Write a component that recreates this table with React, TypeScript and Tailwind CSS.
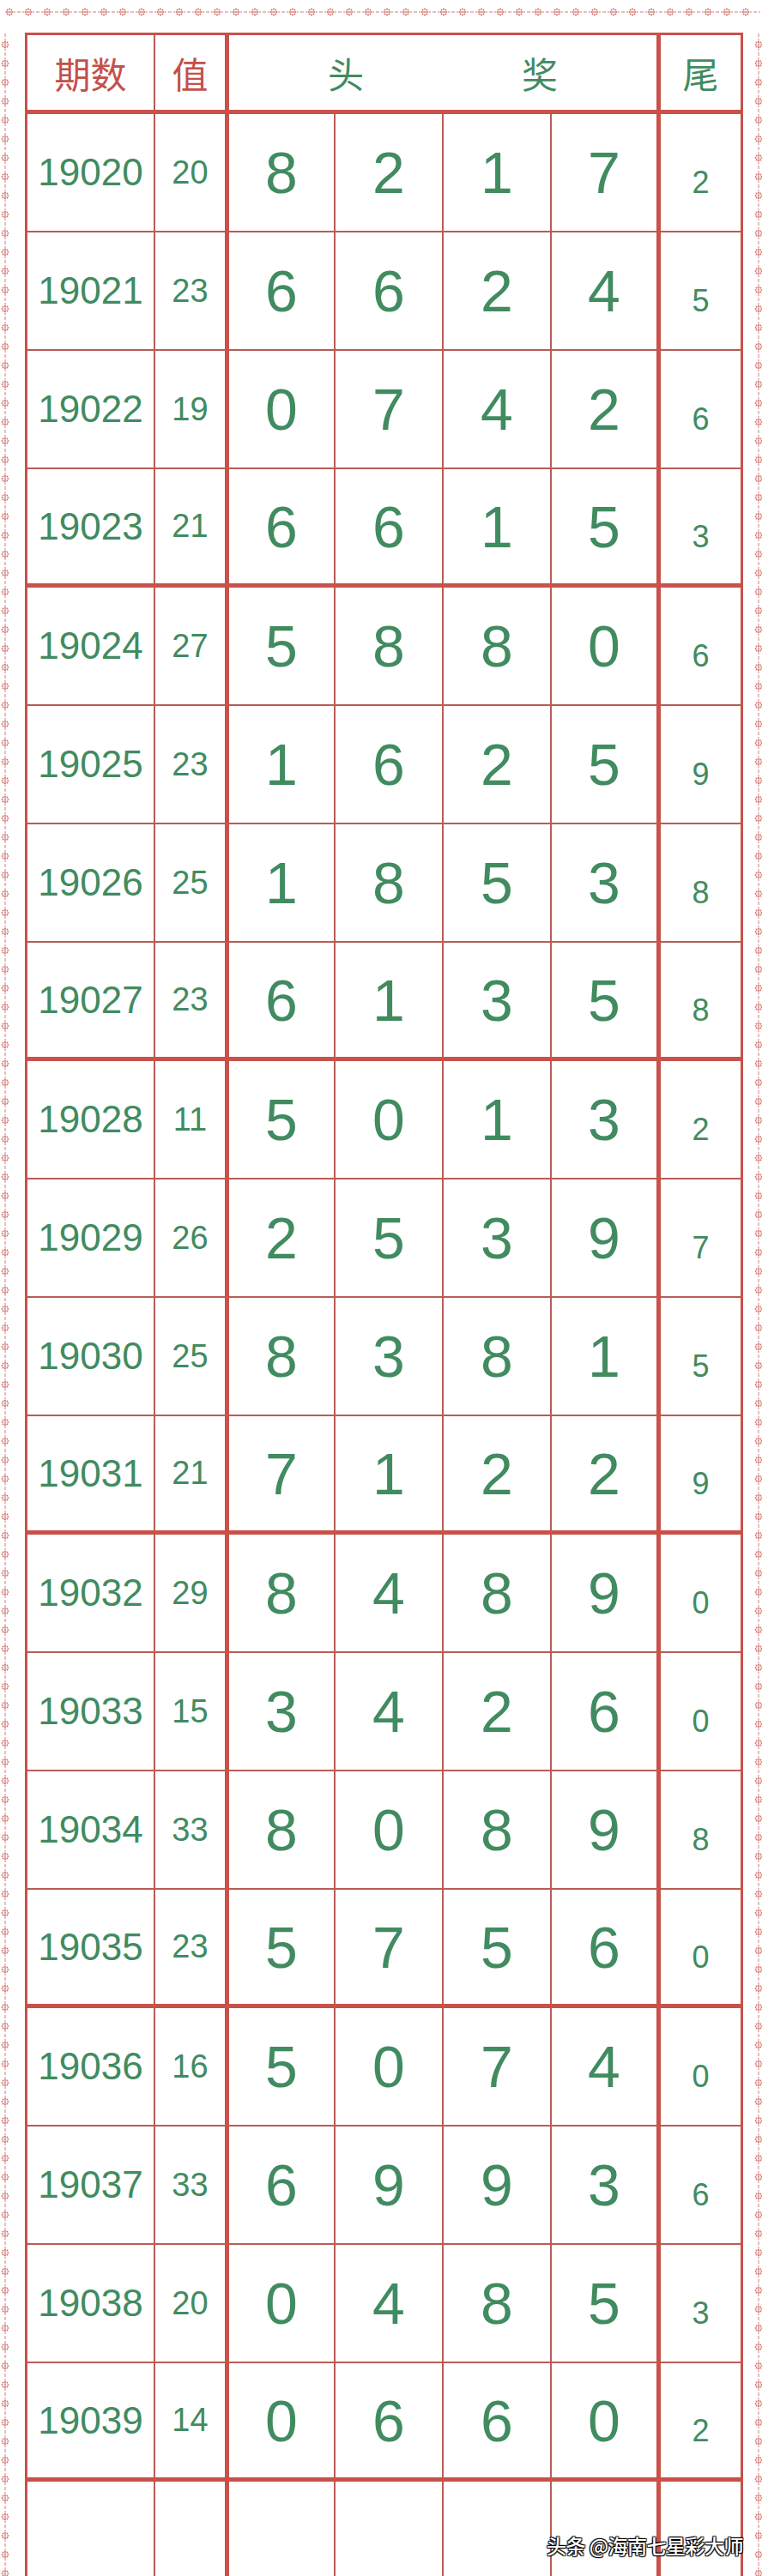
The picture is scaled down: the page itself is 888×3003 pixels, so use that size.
import React from "react";

type Draw = { id: string; sum: string; nums: string; tail: string };

// 期号 / 值 / 头奖四位 / 尾
const draws: Draw[] = [
  { id: "19020", sum: "20", nums: "8217", tail: "2" },
  { id: "19021", sum: "23", nums: "6624", tail: "5" },
  { id: "19022", sum: "19", nums: "0742", tail: "6" },
  { id: "19023", sum: "21", nums: "6615", tail: "3" },
  { id: "19024", sum: "27", nums: "5880", tail: "6" },
  { id: "19025", sum: "23", nums: "1625", tail: "9" },
  { id: "19026", sum: "25", nums: "1853", tail: "8" },
  { id: "19027", sum: "23", nums: "6135", tail: "8" },
  { id: "19028", sum: "11", nums: "5013", tail: "2" },
  { id: "19029", sum: "26", nums: "2539", tail: "7" },
  { id: "19030", sum: "25", nums: "8381", tail: "5" },
  { id: "19031", sum: "21", nums: "7122", tail: "9" },
  { id: "19032", sum: "29", nums: "8489", tail: "0" },
  { id: "19033", sum: "15", nums: "3426", tail: "0" },
  { id: "19034", sum: "33", nums: "8089", tail: "8" },
  { id: "19035", sum: "23", nums: "5756", tail: "0" },
  { id: "19036", sum: "16", nums: "5074", tail: "0" },
  { id: "19037", sum: "33", nums: "6993", tail: "6" },
  { id: "19038", sum: "20", nums: "0485", tail: "3" },
  { id: "19039", sum: "14", nums: "0660", tail: "2" },
];

const COLS = "grid grid-cols-[149px_86px_124px_126px_126px_127px_96px]";
const digitFont = { fontFamily: '"Liberation Sans", Arial, sans-serif' };

function Flower({ cx, cy }: { cx: number; cy: number }) {
  const dots = [0, 45, 90, 135, 180, 225, 270, 315].map((a) => {
    const r = (a * Math.PI) / 180;
    return <circle key={a} cx={cx + Math.cos(r) * 3.4} cy={cy + Math.sin(r) * 3.4} r={1.05} />;
  });
  return (
    <g fill="#d27d76">
      {dots}
      <circle cx={cx} cy={cy} r={1} />
    </g>
  );
}

// dotted frame strip, flowers every 22px joined by a dashed line
function FrameStrip({ vertical, id, offset }: { vertical?: boolean; id: string; offset: number }) {
  return (
    <svg className="block w-full h-full">
      <defs>
        {vertical ? (
          <pattern id={id} width="12" height="22" patternUnits="userSpaceOnUse" x={offset - 6} y="3">
            <line x1="6" y1="0" x2="6" y2="22" stroke="#d27d76" strokeWidth="1" strokeDasharray="2 2" />
            <Flower cx={6} cy={11} />
          </pattern>
        ) : (
          <pattern id={id} width="22" height="12" patternUnits="userSpaceOnUse" x="0" y={offset - 6}>
            <line x1="0" y1="6" x2="22" y2="6" stroke="#d27d76" strokeWidth="1" strokeDasharray="2 2" />
            <Flower cx={11} cy={6} />
          </pattern>
        )}
      </defs>
      {vertical ? (
        <rect x={offset - 6} y="0" width="12" height="100%" fill={`url(#${id})`} />
      ) : (
        <rect x="6" y={offset - 6} width="880" height="12" fill={`url(#${id})`} />
      )}
    </svg>
  );
}

function Row({ d, i }: { d: Draw; i: number }) {
  const thick = i % 4 === 3;
  const rowBorder = thick ? "border-b-[5px] border-b-[#c9514a]" : "border-b-[2px] border-b-[#b95c55]";
  return (
    <div className={`${COLS} h-[138px]`} style={digitFont}>
      <div className={`${rowBorder} border-r-[2px] border-r-[#b95c55] flex items-center justify-center text-[44px] text-[#418b60]`}>
        {d.id}
      </div>
      <div className={`${rowBorder} border-r-[5px] border-r-[#c9514a] flex items-center justify-center text-[38px] text-[#418b60]`}>
        {d.sum}
      </div>
      {d.nums.split("").map((n, k) => (
        <div
          key={k}
          className={`${rowBorder} ${k === 3 ? "border-r-[5px] border-r-[#c9514a]" : "border-r-[2px] border-r-[#b95c55]"} flex items-center justify-center text-[68px] text-[#418b60]`}
        >
          {n}
        </div>
      ))}
      <div className={`${rowBorder} border-r-[3px] border-r-[#c9514a] flex items-center justify-center pt-6 text-[36px] text-[#418b60]`}>
        {d.tail}
      </div>
    </div>
  );
}

export default function App() {
  const cjk = { fontFamily: '"Noto Sans CJK SC", "Noto Sans", sans-serif' };
  return (
    <div className="relative w-[888px] bg-white overflow-hidden">
      <div className="h-[38px]">
        <FrameStrip id="ftop" offset={14} />
      </div>
      <div className="flex">
        <div className="w-[29px]">
          <FrameStrip vertical id="fleft" offset={6} />
        </div>

        <div className="w-[837px] border-l-[3px] border-t-[3px] border-[#c9514a]">
          {/* header */}
          <div className={`${COLS} h-[92px]`} style={cjk}>
            <div className="border-b-[5px] border-b-[#c9514a] border-r-[2px] border-r-[#b95c55] flex items-center justify-center text-[42px] text-[#c4504a]">
              期数
            </div>
            <div className="border-b-[5px] border-b-[#c9514a] border-r-[5px] border-r-[#c9514a] flex items-center justify-center text-[42px] text-[#c4504a]">
              值
            </div>
            <div className="col-span-4 border-b-[5px] border-b-[#c9514a] border-r-[5px] border-r-[#c9514a] flex items-center justify-center gap-[184px] text-[42px] text-[#418b60]">
              <span>头</span>
              <span>奖</span>
            </div>
            <div className="border-b-[5px] border-b-[#c9514a] border-r-[3px] border-r-[#c9514a] flex items-center justify-center text-[42px] text-[#418b60]">
              尾
            </div>
          </div>

          {draws.map((d, i) => (
            <Row key={d.id} d={d} i={i} />
          ))}

          {/* empty trailing row */}
          <div className={`${COLS} h-[140px]`}>
            <div className="border-r-[2px] border-r-[#b95c55]" />
            <div className="border-r-[5px] border-r-[#c9514a]" />
            <div className="border-r-[2px] border-r-[#b95c55]" />
            <div className="border-r-[2px] border-r-[#b95c55]" />
            <div className="border-r-[2px] border-r-[#b95c55]" />
            <div className="border-r-[5px] border-r-[#c9514a]" />
            <div className="border-r-[3px] border-r-[#c9514a]" />
          </div>
        </div>

        <div className="w-[22px]">
          <FrameStrip vertical id="fright" offset={18} />
        </div>
      </div>

      {/* watermark */}
      <div
        className="absolute left-[637px] top-[2956px] text-[23px] font-medium leading-none tracking-[-0.5px] text-white whitespace-nowrap [text-shadow:1px_1px_1px_#000,-1px_-1px_1px_#000,1px_-1px_1px_#000,-1px_1px_1px_#000]"
        style={cjk}
      >
        头条 @海南七星彩大师
      </div>
    </div>
  );
}
